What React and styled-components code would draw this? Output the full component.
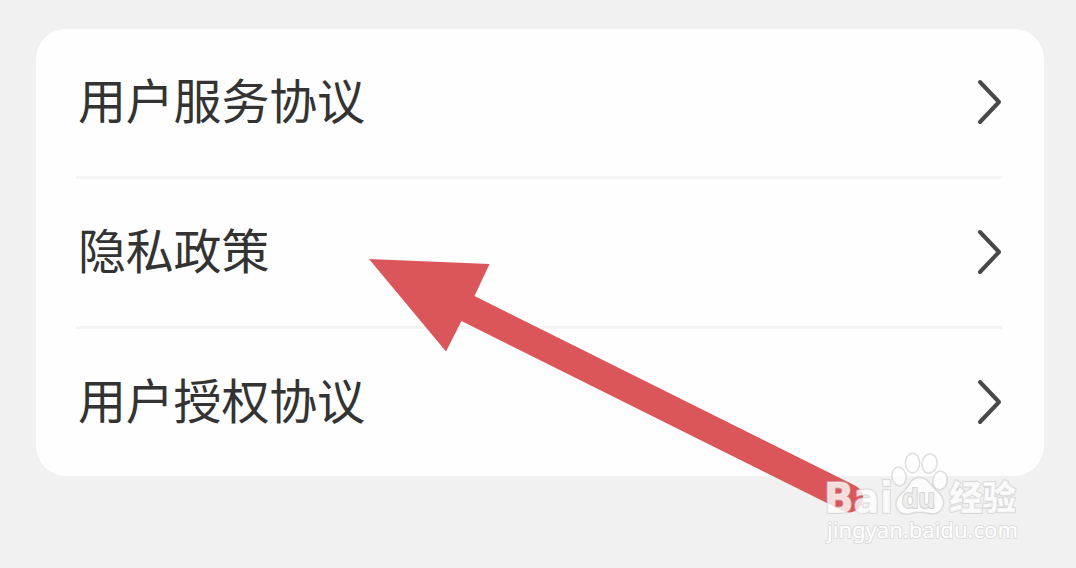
import React from "react";
import styled, { createGlobalStyle } from "styled-components";

const GlobalStyle = createGlobalStyle`
  * {
    box-sizing: border-box;
  }
  body {
    margin: 0;
    background-color: #f1f1f1;
    font-family: "Noto Sans CJK SC", sans-serif;
  }
`;

const Container = styled.div`
  position: relative;
  width: 100%;
  height: 568px;
  padding: 29px 32px 0 36px;
  overflow: hidden;
`;

const List = styled.ul`
  height: 447px;
  margin: 0;
  padding: 0 42px 0 40px;
  list-style: none;
  display: grid;
  grid-template-rows: 150px 150px 147px;
  background-color: #fefefe;
  border-radius: 30px;
`;

const Item = styled.li`
  display: flex;
  justify-content: space-between;
  align-items: center;
  padding-left: 2px;
  padding-bottom: 1px;
  border-bottom: ${(props) => (props.$last ? "none" : "3px solid #f4f4f4")};
`;

const Title = styled.span`
  padding-bottom: 8px;
  color: #333333;
  font-size: 48px;
  font-weight: 400;
  line-height: 70px;
  letter-spacing: -0.2px;
`;

const Chevron = styled.svg`
  display: block;
  width: 26px;
  height: 46px;
  fill: none;
  stroke: #484848;
  stroke-width: 4;
  stroke-linecap: round;
  stroke-linejoin: round;
`;

const Overlay = styled.svg`
  position: absolute;
  top: 0;
  left: 0;
  pointer-events: none;
`;

const Watermark = styled.g`
  fill: #ffffff;
  fill-opacity: 0.78;
  stroke: #c8c8c8;
  stroke-opacity: 0.6;
  stroke-width: 2;
  stroke-linejoin: round;
  paint-order: stroke;
`;

const Brand = styled.text`
  font-family: "DejaVu Sans", sans-serif;
  font-size: 43px;
  font-weight: 700;
`;

const Paw = styled.g`
  stroke-width: 1.5;
  paint-order: normal;
`;

const PawText = styled.text`
  font-family: "Liberation Sans", sans-serif;
  font-size: 28px;
  font-weight: 700;
  fill: #ededed;
  fill-opacity: 1;
  stroke-opacity: 0.8;
`;

const Chinese = styled.text`
  font-family: "Noto Sans CJK SC", sans-serif;
  font-size: 34px;
  font-weight: 900;
`;

const Url = styled.text`
  font-family: "Noto Sans", sans-serif;
  font-size: 22px;
  font-weight: 400;
  fill-opacity: 1;
  stroke-width: 2;
  stroke-opacity: 0.5;
`;

const items = ["用户服务协议", "隐私政策", "用户授权协议"];

const Arrow = () => (
  <path
    fill="#db565b"
    d="M369 259 489.500 264 474.500 296 855 485.500A14 14 0 0 1 843 511L461.500 321 446 351.500Z"
  />
);

const BaiduMark = () => (
  <Watermark>
    <Brand x="824" y="512.500" textLength="69" lengthAdjust="spacingAndGlyphs">
      Bai
    </Brand>
    <Paw>
      <ellipse cx="899" cy="476.500" rx="7" ry="9.500" transform="rotate(-10 899 476.500)" />
      <ellipse cx="912.500" cy="463" rx="7.200" ry="9.700" />
      <ellipse cx="929.500" cy="463.500" rx="7.500" ry="9.700" transform="rotate(10 929.500 463.500)" />
      <ellipse cx="940" cy="480.500" rx="7.200" ry="9.500" transform="rotate(10 940 480.500)" />
      <path d="M919 477.500C928 477.500 930 485 936 490C942 495 945 500 943 506C940 515 933 514.500 926 513C921 512 916 512 911 513.500C903 515.500 898 513 896 506C895 499 900 495 905 490C910 485 911 477.500 919 477.500Z" />
    </Paw>
    <PawText x="902" y="507.500" textLength="33" lengthAdjust="spacingAndGlyphs">
      du
    </PawText>
    <Chinese x="949" y="510" textLength="67" lengthAdjust="spacingAndGlyphs">
      经验
    </Chinese>
    <Url x="827" y="538" textLength="191" lengthAdjust="spacingAndGlyphs">
      jingyan.baidu.com
    </Url>
  </Watermark>
);

export default () => {
  return (
    <Container>
      <GlobalStyle />
      <List>
        {items.map((title, index) => (
          <Item key={title} $last={index === items.length - 1}>
            <Title>{title}</Title>
            <Chevron viewBox="0 0 26 46">
              <path d="M4 3 23 23 4 43" />
            </Chevron>
          </Item>
        ))}
      </List>
      <Overlay width="1076" height="568" viewBox="0 0 1076 568">
        <Arrow />
        <BaiduMark />
      </Overlay>
    </Container>
  );
};
